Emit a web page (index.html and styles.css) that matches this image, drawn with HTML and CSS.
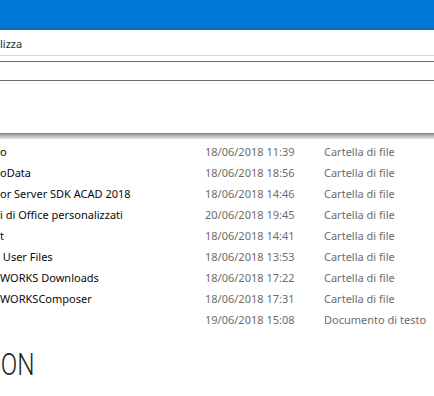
FILE: index.html
```html
<!DOCTYPE html>
<html lang="it">
<head>
    <meta charset="UTF-8">
    <title>Esplora file</title>
    <link rel="stylesheet" href="styles.css">
</head>
<body>
    <div class="titlebar"></div>
    <div class="ribbon">
        <span class="tab">lizza</span>
    </div>
    <div class="addressbar"></div>
    <div class="header-area"></div>
    <div class="shadow"></div>
    <div class="list">
        <div class="row"><span class="name">o</span><span class="date">18/06/2018 11:39</span><span class="type">Cartella di file</span></div>
        <div class="row"><span class="name">oData</span><span class="date">18/06/2018 18:56</span><span class="type">Cartella di file</span></div>
        <div class="row"><span class="name">or Server SDK ACAD 2018</span><span class="date">18/06/2018 14:46</span><span class="type">Cartella di file</span></div>
        <div class="row"><span class="name">i di Office personalizzati</span><span class="date">20/06/2018 19:45</span><span class="type">Cartella di file</span></div>
        <div class="row"><span class="name">t</span><span class="date">18/06/2018 14:41</span><span class="type">Cartella di file</span></div>
        <div class="row"><span class="name">&nbsp;User Files</span><span class="date">18/06/2018 13:53</span><span class="type">Cartella di file</span></div>
        <div class="row"><span class="name">WORKS Downloads</span><span class="date">18/06/2018 17:22</span><span class="type">Cartella di file</span></div>
        <div class="row"><span class="name">WORKSComposer</span><span class="date">18/06/2018 17:31</span><span class="type">Cartella di file</span></div>
        <div class="row"><span class="name"></span><span class="date">19/06/2018 15:08</span><span class="type">Documento di testo</span></div>
    </div>
    <div class="caption">ON</div>
</body>
</html>
```

FILE: styles.css
```css
body {
    margin: 0;
    width: 434px;
    height: 396px;
    overflow: hidden;
    background: #fff;
    font-family: "Noto Sans", "Open Sans", sans-serif;
    font-size: 11px;
}

.titlebar {
    height: 28px;
    background: #0078d7;
    border-bottom: 2px solid #1468ad;
}

.ribbon {
    height: 23px;
    padding-top: 2px;
    border-bottom: 1px solid #d6dadf;
    display: flex;
    align-items: center;
}

.tab {
    color: #2b2b2b;
}

.addressbar {
    height: 18px;
    margin-top: 5px;
    border-top: 1px solid #3b7a8c;
    border-bottom: 1px solid #6b6b6b;
}

.header-area {
    height: 52px;
}

.shadow {
    height: 6px;
    background: linear-gradient(#7c7c7c, #b4b4b4 40%, #e4e4e4);
}

.list {
    padding-top: 2px;
}

.row {
    height: 21px;
    display: flex;
    align-items: center;
    white-space: nowrap;
}

.name {
    width: 205px;
    color: #0a0a0a;
}

.date {
    width: 119px;
    color: #6d6d6d;
}

.type {
    color: #6d6d6d;
}

.caption {
    margin-top: 18px;
    padding-left: 1px;
    font-family: "Roboto", sans-serif;
    font-weight: 300;
    font-size: 32px;
    color: #1e1e1e;
    transform: scaleX(0.76);
    transform-origin: left;
    line-height: 1;
}
```
